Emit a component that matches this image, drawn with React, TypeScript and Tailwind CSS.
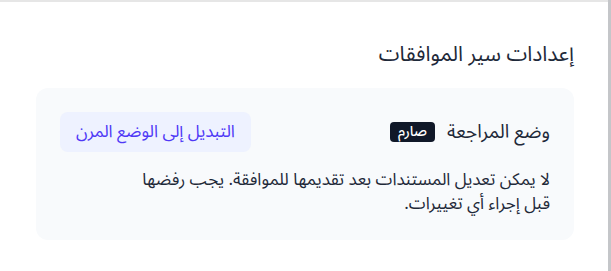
import React from 'react';

export default function App() {
  return (
    <div
      dir="rtl"
      className="flex h-[271px] w-[611px] bg-white text-gray-900"
      style={{ fontFamily: '"Noto Sans Arabic", "Noto Sans", "DejaVu Sans", sans-serif' }}
    >
      {/* edge of the neighbouring panel */}
      <div className="w-[3px] shrink-0 bg-[#c4c6c9]" />

      <div className="flex-1 border-t-2 border-[#e6e6e6] pr-[34px] pl-9 pt-[38px]">
        <h2 className="text-[21px] leading-7 text-gray-800">إعدادات سير الموافقات</h2>

        <div className="mt-5 rounded-xl bg-slate-50 p-6">
          <div className="flex items-center justify-between">
            <div className="flex items-center gap-3">
              <span className="text-[19px] text-gray-800">وضع المراجعة</span>
              <span className="rounded bg-gray-900 px-2 text-sm leading-5 font-medium text-white">صارم</span>
            </div>
            <button className="rounded-lg bg-indigo-50 px-4 py-2 text-[17px] leading-6 text-indigo-600">
              التبديل إلى الوضع المرن
            </button>
          </div>
          <p className="mt-4 max-w-[426px] text-[17px] leading-6 text-gray-800">
            لا يمكن تعديل المستندات بعد تقديمها للموافقة. يجب رفضها قبل إجراء أي تغييرات.
          </p>
        </div>
      </div>
    </div>
  );
}
